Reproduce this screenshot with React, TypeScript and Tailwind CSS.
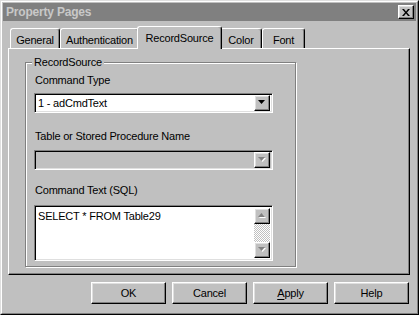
import React from "react";

const raised =
  "border border-t-white border-l-white border-r-black border-b-black shadow-[inset_-1px_-1px_0_#808080,inset_1px_1px_0_#dfdfdf]";
const sunken =
  "border border-t-[#808080] border-l-[#808080] border-r-white border-b-white shadow-[inset_1px_1px_0_#000,inset_-1px_-1px_0_#dfdfdf]";

function Arrow({ dir, disabled }: { dir: "down" | "up"; disabled?: boolean }) {
  const pts = dir === "down" ? "0,0 7,0 3.5,4" : "3.5,0 7,4 0,4";
  return (
    <svg width="9" height="6" viewBox="0 0 9 6" className="block">
      {disabled && <polygon points={pts} fill="#ffffff" transform="translate(1,1)" />}
      <polygon points={pts} fill={disabled ? "#808080" : "#000000"} />
    </svg>
  );
}

function ArrowBtn({ dir, disabled, h = 17 }: { dir: "down" | "up"; disabled?: boolean; h?: number }) {
  return (
    <div
      className={`${raised} w-[16px] bg-[#c0c0c0] flex items-center justify-center shrink-0`}
      style={{ height: h }}
    >
      <Arrow dir={dir} disabled={disabled} />
    </div>
  );
}

function Tab({ label, w, selected }: { label: string; w: number; selected?: boolean }) {
  return (
    <div
      className={
        selected
          ? "relative z-10 -mx-[2px] mb-[-1px] h-[23px] bg-[#c0c0c0] border border-b-0 border-t-white border-l-white border-r-black rounded-t-[3px] shadow-[inset_-1px_0_0_#808080] flex justify-center pt-[5px] leading-[13px]"
          : "h-[20px] border border-b-0 border-t-white border-l-white border-r-black rounded-t-[3px] shadow-[inset_-1px_0_0_#808080] flex justify-center pt-[5px] leading-[13px]"
      }
      style={{ width: selected ? w + 4 : w }}
    >
      {label}
    </div>
  );
}

function Button({ children }: { children: React.ReactNode }) {
  return (
    <div className={`${raised} w-[75px] h-[22px] flex items-center justify-center leading-[13px]`}>
      {children}
    </div>
  );
}

export default function App() {
  return (
    <div className="w-[419px] h-[315px] bg-[#c0c0c0] border border-t-[#dfdfdf] border-l-[#dfdfdf] border-r-black border-b-black font-['Liberation_Sans',Arial,sans-serif] text-[11px] tracking-[-0.2px] text-black">
      <div className="h-full border border-t-white border-l-white border-r-[#808080] border-b-[#808080] p-px flex flex-col">
        {/* Title bar */}
        <div className="h-[18px] bg-[#808080] flex items-center justify-between pl-[3px] pr-[2px] shrink-0">
          <span className="font-bold text-[12px] text-[#c8c8c8]">Property Pages</span>
          <div className={`${raised} w-[16px] h-[14px] bg-[#c0c0c0] flex items-center justify-center`}>
            <svg width="8" height="7" viewBox="0 0 8 7">
              <path d="M0 0h2l2 2.5L6 0h2L5 3.5 8 7H6L4 4.5 2 7H0l3-3.5z" fill="#000" />
            </svg>
          </div>
        </div>

        {/* Body */}
        <div className="pl-[5px] pr-[6px] pt-[5px]">
          <div className="h-[22px] flex items-end pl-[2px]">
            <Tab label="General" w={50} />
            <Tab label="Authentication" w={79} />
            <Tab label="RecordSource" w={81} selected />
            <Tab label="Color" w={42} />
            <Tab label="Font" w={43} />
          </div>
          <div className="h-[227px] border border-t-white border-l-white border-r-black border-b-black shadow-[inset_-1px_-1px_0_#808080] pt-[13px] pl-[16px]">
            {/* Group box */}
            <div className="relative w-[271px] h-[205px] border border-[#808080] shadow-[1px_1px_0_#fff,inset_1px_1px_0_#fff] pl-[8px] pt-[11px]">
              <span className="absolute left-[6px] -top-[7px] bg-[#c0c0c0] px-[2px] leading-[13px]">
                RecordSource
              </span>
              <div className="leading-[13px] pl-px">Command Type</div>
              <div className={`${sunken} mt-[6px] w-[239px] h-[20px] bg-white flex items-center p-[2px]`}>
                <span className="flex-1 pl-[1px] leading-[13px]">1 - adCmdText</span>
                <ArrowBtn dir="down" h={16} />
              </div>
              <div className="leading-[13px] pl-px mt-[17px]">Table or Stored Procedure Name</div>
              <div className={`${sunken} mt-[7px] w-[239px] h-[20px] bg-[#c0c0c0] flex items-center justify-end p-[2px]`}>
                <ArrowBtn dir="down" disabled h={16} />
              </div>
              <div className="leading-[13px] pl-px mt-[14px]">Command Text (SQL)</div>
              <div className={`${sunken} mt-[8px] w-[239px] h-[56px] bg-white flex p-[2px]`}>
                <span className="flex-1 pl-[1px] pt-[2px] leading-[13px]">SELECT * FROM Table29</span>
                <div className="w-[16px] flex flex-col">
                  <ArrowBtn dir="up" disabled h={16} />
                  <div className="flex-1 bg-[repeating-conic-gradient(#ffffff_0%_25%,#c0c0c0_0%_50%)] bg-[length:2px_2px]" />
                  <ArrowBtn dir="down" disabled h={16} />
                </div>
              </div>
            </div>
          </div>
        </div>

        {/* Buttons */}
        <div className="mt-[7px] flex justify-end gap-[6px] pr-[7px]">
          <Button>OK</Button>
          <Button>Cancel</Button>
          <Button>
            <span>
              <span className="underline underline-offset-2">A</span>pply
            </span>
          </Button>
          <Button>Help</Button>
        </div>
      </div>
    </div>
  );
}
